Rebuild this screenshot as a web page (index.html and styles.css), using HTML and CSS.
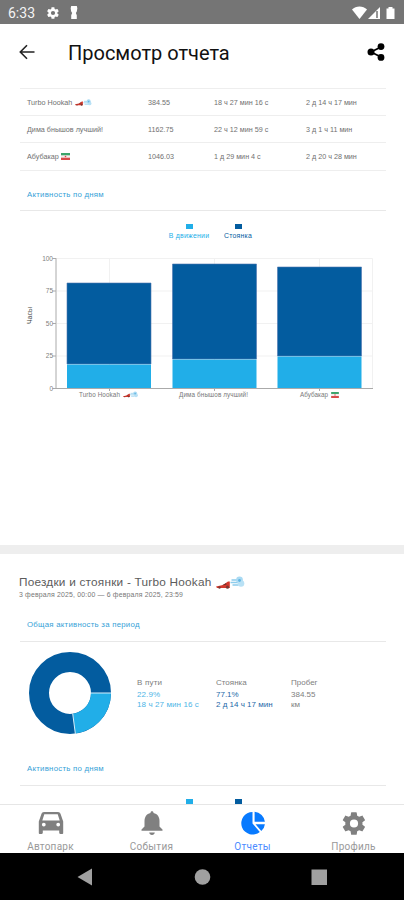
FILE: index.html
```html
<!DOCTYPE html>
<html lang="ru">
<head>
<meta charset="utf-8">
<title>Просмотр отчета</title>
<link rel="stylesheet" href="styles.css">
</head>
<body>
<svg width="0" height="0" class="defs">
  <symbol id="racer" viewBox="0 0 14 8"><path d="M0 5.400 7 4 12 .5h1.800V7H1z" fill="#d3382c"/><path d="M6 4.200 10 2.300 10.500 3.600z" fill="#54302d"/><circle cx="3.500" cy="6.500" r="1.200" fill="#7a3833"/><circle cx="11.500" cy="6.200" r="1.600" fill="#7a3833"/></symbol>
  <symbol id="dash" viewBox="0 0 14 12"><path d="M1 4h6M0 6.500h8M2 9h6" stroke="#8cccec" stroke-width="1.300"/><circle cx="9" cy="4" r="3.400" fill="#a9daf3"/><circle cx="10.500" cy="7.500" r="3.300" fill="#b9e1f5"/><circle cx="9" cy="4.500" r="1.400" fill="#62b5e2"/></symbol>
  <symbol id="flag" viewBox="0 0 9 7"><path d="M0 .5h9v6H0z" fill="#f5eeee"/><path d="M0 0h9v2.300H0z" fill="#3ca46b"/><path d="M0 4.700h9V7H0z" fill="#d84a49"/><circle cx="4.500" cy="3.500" r=".8" fill="#d84a49"/></symbol>
  <symbol id="gear" viewBox="0 0 24 24"><path fill-rule="evenodd" d="M19.400 13c.1-.7.1-1.300 0-2l2.100-1.600c.2-.2.300-.5.100-.7l-2-3.400c-.1-.2-.4-.3-.6-.2l-2.500 1c-.5-.4-1.100-.7-1.700-1l-.4-2.600c0-.3-.2-.5-.5-.5h-4c-.3 0-.5.200-.5.500L9 5.100c-.6.300-1.200.6-1.700 1l-2.500-1c-.2-.1-.5 0-.6.200l-2 3.400c-.1.200-.1.500.1.700L4.400 11a8 8 0 0 0 0 2l-2.100 1.600c-.2.200-.2.500-.1.700l2 3.400c.1.200.4.300.6.200l2.500-1c.5.400 1.100.7 1.700 1l.4 2.600c0 .3.200.5.500.5h4c.3 0 .5-.2.500-.5l.4-2.600c.6-.3 1.200-.6 1.700-1l2.500 1c.2.100.5 0 .6-.2l2-3.400c.1-.2.100-.5-.1-.7zM12 15.600a3.600 3.600 0 1 1 0-7.200 3.600 3.600 0 0 1 0 7.200z"/></symbol>
</svg>
<div class="phone">
  <div class="status">
    <span class="clock">6:33</span>
    <svg class="s-gear" viewBox="0 0 24 24"><use href="#gear"/></svg>
    <svg class="s-key" viewBox="0 0 8 14"><path d="M1 0h6l.6 2.500L7 6 6 7.500 7 10v4H1v-4l1-2.500L1 6 .4 2.500z"/></svg>
    <span class="grow"></span>
    <svg class="s-right" width="46" height="14" viewBox="0 0 46 14"><path d="M0 3.500C4-.5 11-.5 15 3.500L7.500 13z"/><path d="M28 1v12H16z"/><path d="M25 5v7" stroke="#757575" stroke-width="1.500"/><path d="M34.500 2.500h2V1h4v1.500h2V13h-8z"/></svg>
  </div>
  <header class="appbar">
    <svg class="back" viewBox="0 0 16 16"><path d="M15.500 8H1.500M8 1.200 1.300 8 8 14.800"/></svg>
    <h1>Просмотр отчета</h1>
    <svg class="share" viewBox="0 0 18 18"><path d="M14 4 4 9l10 5" fill="none" stroke="#000" stroke-width="1.800"/><circle cx="14" cy="3.600" r="3.400"/><circle cx="4" cy="9" r="3.500"/><circle cx="14" cy="14.400" r="3.400"/></svg>
  </header>

  <main class="report">
    <section class="first">
      <div class="table">
        <div class="row"><span>Turbo Hookah <svg class="e-racer"><use href="#racer"/></svg><svg class="e-dash"><use href="#dash"/></svg></span><span>384.55</span><span>18 ч 27 мин 16 с</span><span>2 д 14 ч 17 мин</span></div>
        <div class="row"><span>Дима бнышов лучший!</span><span>1162.75</span><span>22 ч 12 мин 59 с</span><span>3 д 1 ч 11 мин</span></div>
        <div class="row"><span>Абубакар <svg class="e-flag"><use href="#flag"/></svg></span><span>1046.03</span><span>1 д 29 мин 4 с</span><span>2 д 20 ч 28 мин</span></div>
      </div>
      <h3 class="sub days">Активность по дням</h3>
      <div class="legend">
        <div class="move"><i></i>В движении</div>
        <div class="stop"><i></i>Стоянка</div>
      </div>
      <svg class="chart" width="404" height="156" viewBox="0 250 404 156">
        <g class="grid"><path d="M57 258.500H372.500V388M57 291H372M57 323.500H372M57 356H372M109.500 258V388M214.500 258V388M319.500 258V388"/></g>
        <g class="axis"><path d="M56 258V388.500H373M52.500 258.500H56M52.500 291H56M52.500 323.500H56M52.500 356H56M52.500 388.500H56M109.500 388v3M214.500 388v3M319.500 388v3"/></g>
        <g class="dark"><path d="M67 283h84v81H67zM172.500 264h84v95h-84zM277.500 267h84v89h-84z"/></g>
        <g class="light"><path d="M67 364.500h84V388H67zM172.500 359.500h84V388h-84zM277.500 356.500h84V388h-84z"/></g>
        <g class="ticks"><text x="53" y="260.500">100</text><text x="53" y="293.200">75</text><text x="53" y="325.700">50</text><text x="53" y="358.200">25</text><text x="53" y="390.500">0</text></g>
        <text class="ytitle" transform="translate(31.500 324) rotate(-90)" textLength="17">Часы</text>
        <g class="names"><text x="79" y="397.300" textLength="41">Turbo Hookah</text><text x="179" y="397.300" textLength="69">Дима бнышов лучший!</text><text x="300" y="397.300" textLength="28">Абубакар</text></g>
        <use href="#racer" x="123" y="393" width="7" height="5"/><use href="#dash" x="130" y="391" width="8" height="7"/><use href="#flag" x="331" y="392" width="8" height="6"/>
      </svg>
    </section>
    <section class="second">
      <h2>Поездки и стоянки - Turbo Hookah <svg class="h-racer"><use href="#racer"/></svg><svg class="h-dash"><use href="#dash"/></svg></h2>
      <p class="period">3 февраля 2025, 00:00 — 6 февраля 2025, 23:59</p>
      <h3 class="sub total">Общая активность за период</h3>
      <div class="summary">
        <svg class="donut" width="82" height="82" viewBox="-41 -41 82 82"><circle r="31" fill="none" stroke="#035c9f" stroke-width="20"/><path d="M41 0A41 41 0 0 1 5.400 40.600L2.800 20.800A21 21 0 0 0 21 0z" fill="#21aee8"/><path d="M20.500 0H41M2.700 20.500 5.400 41" stroke="#d8eefa"/></svg>
        <dl class="go"><dt>В пути</dt><dd>22.9%</dd><dd>18 ч 27 мин 16 с</dd></dl>
        <dl class="stay"><dt>Стоянка</dt><dd>77.1%</dd><dd>2 д 14 ч 17 мин</dd></dl>
        <dl class="run"><dt>Пробег</dt><dd>384.55</dd><dd>км</dd></dl>
      </div>
      <h3 class="sub days2">Активность по дням</h3>
      <div class="legend cut"><div class="move"><i></i></div><div class="stop"><i></i></div></div>
    </section>
  </main>

  <nav class="tabs">
    <a><svg viewBox="0 0 26 24"><path fill-rule="evenodd" d="M22.600 3C22.200 1.700 21.300 1 20 1H6C4.700 1 3.800 1.700 3.400 3L.8 10.500V22c0 .7.500 1 1.200 1h1.600c.8 0 1.200-.5 1.200-1.200V19.500h16.400v2.300c0 .7.400 1.200 1.200 1.200H24c.7 0 1.200-.3 1.200-1V10.500zM6.300 3.200h13.400l2 6.300H4.300zM5.800 15.500a1.900 1.900 0 1 1 0-3.800 1.900 1.900 0 0 1 0 3.800zm14.400 0a1.900 1.900 0 1 1 0-3.800 1.900 1.900 0 0 1 0 3.800z"/></svg><span>Автопарк</span></a>
    <a><svg viewBox="0 0 26 24"><path d="M13 .2c1 0 1.500.7 1.500 1.700 4 .8 6 4 6 8.100v5.500l3 3v1.200h-21v-1.200l3-3V10c0-4.100 2-7.300 6-8.100 0-1 .5-1.700 1.500-1.700zM10.200 21.500h5.600c-.2 1.500-1.200 2.400-2.800 2.400s-2.600-.9-2.800-2.400z"/></svg><span>События</span></a>
    <a class="active"><svg viewBox="0 0 26 24"><path d="M12.500 1v11.500l7.300 8.500A11.300 11.300 0 1 1 12.500 1zM14.600.8A11 11 0 0 1 24.900 10.800H14.600zM15.500 13.300h9.400a10 10 0 0 1-3.600 6.700z"/></svg><span>Отчеты</span></a>
    <a><svg class="big" viewBox="1 1 22 22"><use href="#gear" width="24" height="24"/></svg><span>Профиль</span></a>
  </nav>
  <div class="system">
    <svg width="404" height="47" viewBox="0 0 404 47"><path d="M77.500 24 92 15.500v17z"/><circle cx="202.500" cy="24" r="7.800"/><path d="M311.500 16.500H327v15.500h-15.500z"/></svg>
  </div>
</div>
</body>
</html>
```
FILE: styles.css
```css
* { box-sizing: border-box; margin: 0; padding: 0; }
body { width: 404px; height: 900px; overflow: hidden; background: #fff; font-family: "Liberation Sans", Arial, sans-serif; color: #666; }
svg { display: block; flex: none; }
.defs { height: 0; }
.phone { width: 404px; height: 900px; display: flex; flex-direction: column; }
.grow { flex: 1; }
.status { height: 24px; background: #757575; display: flex; align-items: center; padding: 1px 8px 0; flex: none; color: #f4f4f4; fill: #fff; }
.clock { font: 14px/24px Roboto, sans-serif; width: 38px; }
.s-gear { width: 14px; height: 14px; }
.s-key { width: 8px; height: 13px; margin-left: 10px; }
.s-right { margin-right: -2px; }
.appbar { height: 64px; flex: none; display: flex; align-items: flex-start; padding: 0 19px; }
.back { width: 16px; height: 16px; margin-top: 20px; fill: none; stroke: #222; stroke-width: 1.600; }
.appbar h1 { font: 400 20px/28px Roboto, sans-serif; letter-spacing: 0; color: #111; margin: 15px 0 0 33px; flex: 1; white-space: nowrap; }
.share { width: 18px; height: 18px; margin-top: 19px; }
.report { flex: 1; min-height: 0; overflow: hidden; }
.first { height: 466px; border-bottom: 9px solid #eee; }
.table { margin: 0 18px 0 20px; border-top: 1px solid #eee; }
.row { height: 27.200px; border-bottom: 1px solid #eee; padding-left: 7px; display: grid; grid-template-columns: 121px 66px 92px 1fr; align-items: center; font-size: 7.200px; white-space: nowrap; color: #707070; }
.row span { display: flex; align-items: center; white-space: pre; }
.e-racer { width: 8px; height: 5px; margin: 2px 0 0 1px; }
.e-dash { width: 9px; height: 7px; }
.e-flag { width: 9px; height: 7px; }
.sub { margin: 0 18px 0 20px; padding-left: 7px; border-bottom: 1px solid #e8e8e8; font-weight: 400; font-size: 7.800px; letter-spacing: .26px; color: #369fd7; }
.days { height: 40px; line-height: 47px; }
.legend { display: flex; height: 39px; padding: 13px 0 0 168px; font-size: 6.900px; line-height: 10px; text-align: center; }
.legend div { display: flex; flex-direction: column; align-items: center; gap: 2px; white-space: nowrap; }
.legend i { width: 7px; height: 5.500px; background: currentColor; }
.move { width: 42px; color: #21aee8; letter-spacing: .25px; }
.stop { width: 28px; margin-left: 14px; color: #035c9f; letter-spacing: .25px; }
.grid path { fill: none; stroke: #f1f1f1; }
.axis path { fill: none; stroke: #aaa; }
.dark path { fill: #035c9f; stroke: #4f75b0; stroke-width: .6; }
.light path { fill: #21aee8; }
.ticks text { font-size: 6.500px; text-anchor: end; fill: #808080; }
.ytitle { font-size: 7px; fill: #444; }
.names text { font-size: 6.300px; fill: #777; }
.second { padding-top: 18px; }
.second h2 { height: 19px; display: flex; align-items: center; white-space: pre; padding-left: 19px; font-weight: 400; font-size: 11.800px; letter-spacing: .22px; color: #5c5c5c; }
.h-racer { width: 14px; height: 8px; margin: 6px 0 0 1px; }
.h-dash { width: 15px; height: 12px; }
.period { padding-left: 19px; height: 10px; font-size: 6.900px; line-height: 8px; letter-spacing: .18px; color: #777; }
.total { height: 41px; line-height: 48px; }
.summary { height: 103px; padding: 10px 0 0 29px; display: flex; }
.summary dl { margin-top: 26px; font-size: 8px; line-height: 10px; white-space: nowrap; color: #808080; }
.summary dt { height: 12px; }
.go { width: 79px; margin-left: 26px; }
.stay { width: 75px; }
.summary .go dd { color: #4db5e6; letter-spacing: .1px; }
.summary .stay dd { color: #2469a8; }
.summary .go dt { letter-spacing: .2px; }
.days2 { height: 41px; line-height: 47px; }
.tabs { height: 49px; flex: none; display: grid; grid-template-columns: repeat(4, 101px); border-top: 1px solid #e6e6e6; background: #fff; fill: #808080; color: #999; }
.tabs a { display: flex; flex-direction: column; align-items: center; padding-top: 6px; }
.tabs svg { width: 26px; height: 24px; }
.tabs .big { height: 25px; margin-bottom: -1px; }
.tabs span { font: 10px/14px Roboto, sans-serif; letter-spacing: .25px; margin-top: 5px; }
.tabs .active { fill: #087aff; color: #4c8bff; }
.system { height: 47px; flex: none; background: #000; fill: #a0a0a0; }
```
